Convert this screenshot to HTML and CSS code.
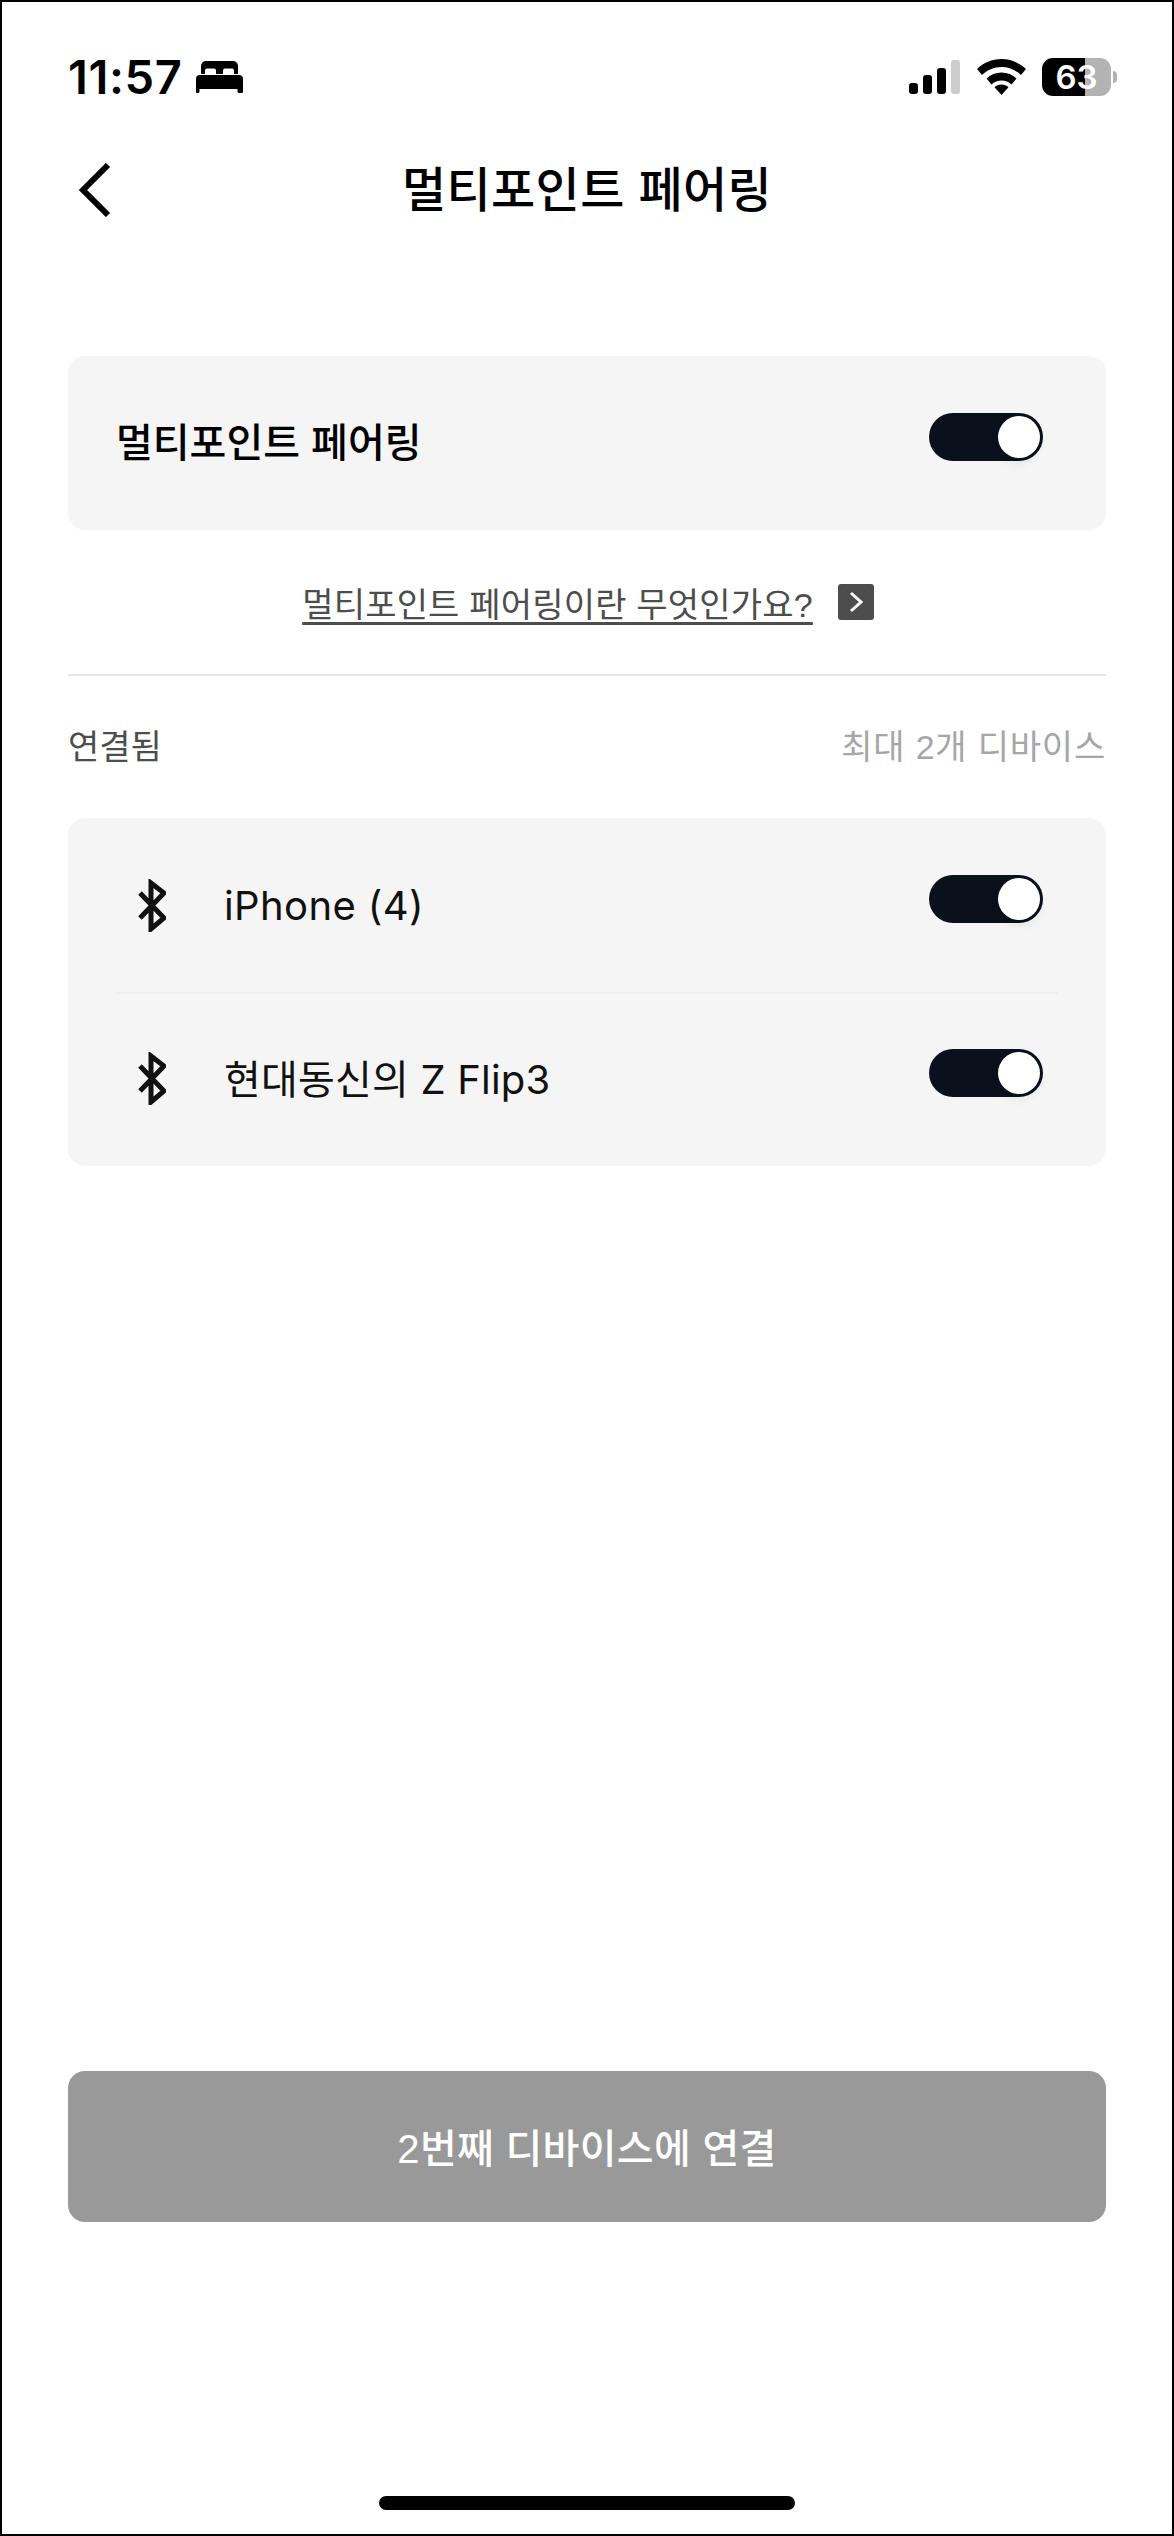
FILE: index.html
```html
<!DOCTYPE html>
<html lang="ko">
<head>
    <meta charset="utf-8">
    <title>멀티포인트 페어링</title>
    <link rel="stylesheet" href="styles.css">
</head>
<body>
    <div class="screen">
        <div class="status-bar">
            <div class="status-left">
                <span class="clock">11:57</span>
                <svg class="bed-icon" viewBox="0 0 47 32">
                    <path d="M5 13V5a5 5 0 0 1 5-5h27a5 5 0 0 1 5 5v8h-4V9.500a2 2 0 0 0-2-2h-7a2 2 0 0 0-2 2V13h-7V9.500a2 2 0 0 0-2-2h-7a2 2 0 0 0-2 2V13z"/>
                    <path d="M4 14h39a4 4 0 0 1 4 4v13a1 1 0 0 1-1 1h-3a1.500 1.500 0 0 1-1.500-1.500V28h-38v2.500A1.500 1.500 0 0 1 2 32H1a1 1 0 0 1-1-1V18a4 4 0 0 1 4-4z"/>
                </svg>
            </div>
            <div class="status-right">
                <div class="signal">
                    <span class="bar bar-1"></span>
                    <span class="bar bar-2"></span>
                    <span class="bar bar-3"></span>
                    <span class="bar bar-4"></span>
                </div>
                <svg class="wifi-icon" viewBox="0 0 49 36">
                    <path d="M24.500 0C34 0 42.500 3.800 49 10l-5 6C38.800 11 32 8 24.500 8S10.200 11 5 16l-5-6C6.500 3.800 15 0 24.500 0z"/>
                    <path d="M24.500 13.500c5.800 0 11 2.300 15 6l-5 6c-2.700-2.500-6.200-4-10-4s-7.300 1.500-10 4l-5-6c4-3.700 9.200-6 15-6z"/>
                    <path d="M24.500 25.500c2.700 0 5.200 1 7 2.700L24.500 36l-7-7.800c1.800-1.700 4.300-2.700 7-2.700z"/>
                </svg>
                <div class="battery"><span>63</span></div>
                <span class="battery-cap"></span>
            </div>
        </div>

        <div class="nav">
            <svg class="back-icon" viewBox="0 0 33 54">
                <path d="M30 2L5 27l25 25"/>
            </svg>
            <h1 class="nav-title">멀티포인트 페어링</h1>
        </div>

        <div class="content">
            <div class="card card-main">
                <span class="card-title">멀티포인트 페어링</span>
                <span class="toggle"><span class="knob"></span></span>
            </div>

            <div class="help-row">
                <span class="help-link">멀티포인트 페어링이란 무엇인가요?</span>
                <span class="help-arrow">
                    <svg viewBox="0 0 36 36"><path d="M13 9l10 9-10 9"/></svg>
                </span>
            </div>

            <div class="divider"></div>

            <div class="section-head">
                <span class="section-label">연결됨</span>
                <span class="section-note">최대 2개 디바이스</span>
            </div>

            <div class="card device-list">
                <div class="device">
                    <svg class="bt-icon" viewBox="0 0 28 53">
                        <path d="M2 14l24 25-13 11V4l13 10L2 39"/>
                    </svg>
                    <span class="device-name">iPhone (4)</span>
                    <span class="toggle"><span class="knob"></span></span>
                </div>
                <div class="device">
                    <svg class="bt-icon" viewBox="0 0 28 53">
                        <path d="M2 14l24 25-13 11V4l13 10L2 39"/>
                    </svg>
                    <span class="device-name">현대동신의 Z Flip3</span>
                    <span class="toggle"><span class="knob"></span></span>
                </div>
            </div>
        </div>

        <button class="connect-btn">2번째 디바이스에 연결</button>
        <div class="home-bar"></div>
    </div>
</body>
</html>
```

FILE: styles.css
```css
* {
    box-sizing: border-box;
}

html, body {
    margin: 0;
    padding: 0;
    background: #fff;
}

body {
    font-family: "Liberation Sans", "Noto Sans CJK KR", sans-serif;
    color: #000;
}

.screen {
    width: 1174px;
    height: 2536px;
    border: 2px solid #000;
    display: flex;
    flex-direction: column;
    padding: 0 66px;
}

/* status bar */
.status-bar {
    display: flex;
    justify-content: space-between;
    align-items: center;
    height: 40px;
    margin-top: 55px;
}

.status-left {
    display: flex;
    align-items: center;
    gap: 14px;
}

.clock {
    font-family: Inter, sans-serif;
    font-size: 47px;
    font-weight: 600;
    line-height: 40px;
    letter-spacing: 0.6px;
}

.bed-icon {
    width: 47px;
    height: 32px;
    fill: #000;
}

.status-right {
    display: flex;
    align-items: center;
    margin-right: -11px;
}

.signal {
    display: flex;
    align-items: flex-end;
    gap: 5px;
    height: 34px;
    margin-right: 17px;
}

.bar {
    width: 9px;
    background: #000;
    border-radius: 3px;
}

.bar-1 { height: 11px; }
.bar-2 { height: 19px; }
.bar-3 { height: 26px; }
.bar-4 { height: 34px; background: #ccc; }

.wifi-icon {
    width: 49px;
    height: 36px;
    fill: #000;
    margin-right: 16px;
}

.battery {
    width: 69px;
    height: 38px;
    border-radius: 11px;
    background: linear-gradient(to right, #000 62%, #b3b3b3 62%);
    color: #fff;
    font-family: Inter, sans-serif;
    font-size: 33px;
    font-weight: 600;
    line-height: 38px;
    text-align: center;
}

.battery-cap {
    width: 4px;
    height: 12px;
    margin-left: 2px;
    background: #b3b3b3;
    border-radius: 0 6px 6px 0;
}

/* header */
.nav {
    display: flex;
    align-items: center;
    justify-content: center;
    position: relative;
    height: 100px;
    margin-top: 43px;
}

.back-icon {
    position: absolute;
    left: 10px;
    top: 23px;
    width: 33px;
    height: 54px;
    fill: none;
    stroke: #000;
    stroke-width: 6;
}

.nav-title {
    margin: 0;
    padding-top: 2px;
    font-size: 48px;
    font-weight: 500;
    line-height: 60px;
    letter-spacing: 0.4px;
}

/* main */
.content {
    margin-top: 116px;
}

.card {
    background: #f5f5f5;
    border-radius: 17px;
}

.card-main {
    display: flex;
    align-items: center;
    justify-content: space-between;
    height: 174px;
    padding: 0 63px 0 48px;
}

.card-title {
    padding-bottom: 6px;
    font-size: 40px;
    font-weight: 500;
}

.toggle {
    display: block;
    flex: none;
    width: 114px;
    height: 48px;
    margin-bottom: 12px;
    padding: 3px;
    background: #0a111c;
    border-radius: 24px;
}

.knob {
    display: block;
    width: 42px;
    height: 42px;
    margin-left: auto;
    background: #fff;
    border-radius: 50%;
    box-shadow: 0 6px 10px rgba(0, 0, 0, 0.06);
}

.help-row {
    display: flex;
    align-items: center;
    justify-content: center;
    gap: 25px;
    height: 144px;
    padding-left: 2px;
}

.help-link {
    font-size: 34px;
    letter-spacing: 0.2px;
    color: #4d4d4d;
    text-decoration: underline;
    text-decoration-thickness: 3px;
    text-underline-offset: 5px;
}

.help-arrow {
    display: block;
    width: 36px;
    height: 36px;
    background: #4d4d4d;
    border-radius: 3px;
}

.help-arrow svg {
    display: block;
    width: 36px;
    height: 36px;
    fill: none;
    stroke: #fff;
    stroke-width: 3;
}

.divider {
    height: 2px;
    background: #e6e6e6;
}

.section-head {
    display: flex;
    justify-content: space-between;
    align-items: center;
    height: 142px;
    padding-bottom: 6px;
    font-size: 34px;
}

.section-label {
    color: #4d4d4d;
}

.section-note {
    letter-spacing: 0.8px;
    color: #a6a6a6;
}

.device-list {
    padding: 0 48px;
}

.device {
    display: flex;
    align-items: center;
    height: 174px;
    padding-right: 15px;
}

.device + .device {
    border-top: 2px solid #efefef;
}

.device + .device .toggle {
    margin-bottom: 14px;
}

.device + .device .device-name {
    padding-bottom: 6px;
    letter-spacing: 0.2px;
}

.device + .device .bt-icon {
    margin-bottom: 4px;
}

.bt-icon {
    flex: none;
    width: 28px;
    height: 53px;
    margin-left: 22px;
    fill: none;
    stroke: #111;
    stroke-width: 5;
}

.device-name {
    flex: 1;
    margin-left: 58px;
    font-family: Inter, "Noto Sans CJK KR", sans-serif;
    font-size: 40px;
    letter-spacing: 0.4px;
    color: #111;
}

/* bottom */
.connect-btn {
    display: block;
    width: 100%;
    height: 151px;
    margin-top: auto;
    padding-bottom: 2px;
    border: none;
    border-radius: 17px;
    background: #999;
    color: #fff;
    font-family: inherit;
    font-size: 40px;
    font-weight: 500;
    letter-spacing: 0.3px;
}

.home-bar {
    align-self: center;
    width: 416px;
    height: 14px;
    margin-top: 274px;
    margin-bottom: 24px;
    background: #000;
    border-radius: 7px;
}
```
